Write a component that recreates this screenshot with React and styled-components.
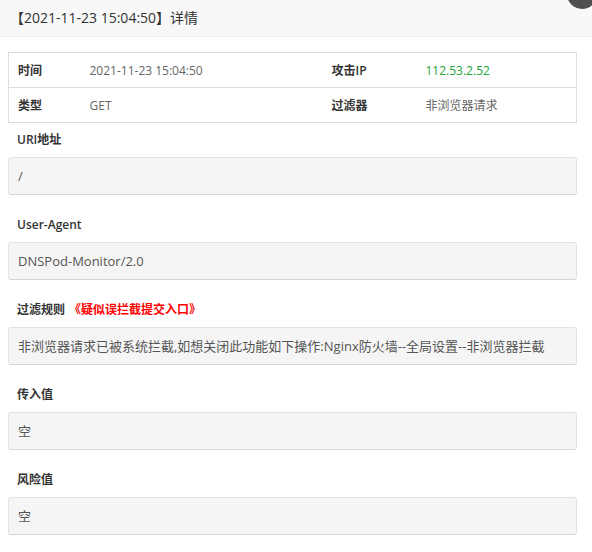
import React from 'react'
import styled, { createGlobalStyle } from 'styled-components'

const GlobalStyle = createGlobalStyle`
  html, body {
    margin: 0;
    padding: 0;
    background: #fff;
  }
  body {
    font-family: "Open Sans", "Noto Sans CJK SC", sans-serif;
    color: #333;
  }
`

const Layer = styled.div`
  position: relative;
  width: 592px;
  height: 552px;
  overflow: hidden;
  background: #fff;
`

const Header = styled.div`
  height: 36px;
  line-height: 36px;
  padding-left: 10px;
  background: #f8f8f8;
  border-bottom: 1px solid #eee;
  font-size: 14px;
  color: #333;
`

const Close = styled.span`
  position: absolute;
  top: -21px;
  right: -5px;
  width: 30px;
  height: 30px;
  border-radius: 50%;
  background: #4f4f4f;
`

const Body = styled.div`
  padding: 15px 15px 0 8px;
`

const Table = styled.table`
  width: 100%;
  table-layout: fixed;
  border-collapse: collapse;
  border: 1px solid #ddd;
  font-size: 12px;
  td {
    height: 34px;
    padding: 0 0 0 9px;
    border-top: 1px solid #ddd;
    color: #666;
  }
`

const Th = styled.td`
  && {
    font-weight: 600;
    color: #333;
  }
`

const Green = styled.span`
  color: #20a53a;
`

const Section = styled.div`
  margin-top: ${p => (p.$first ? 7 : 20)}px;
`

const Label = styled.div`
  height: 20px;
  line-height: 20px;
  padding-left: 9px;
  margin-bottom: 7px;
  font-size: 12px;
  font-weight: 600;
  color: #333;
`

const Link = styled.span`
  color: #f00;
  margin-left: 4px;
`

const Value = styled.div`
  height: 36px;
  line-height: 36px;
  padding-left: 9px;
  background: #f5f5f5;
  border: 1px solid #e2e2e2;
  border-bottom-color: #d6d6d6;
  border-radius: 3px;
  font-size: 13px;
  color: #555;
  white-space: nowrap;
  overflow: hidden;
`

const fields = [
  { label: 'URI地址', value: '/' },
  { label: 'User-Agent', value: 'DNSPod-Monitor/2.0' },
  {
    label: '过滤规则',
    link: '《疑似误拦截提交入口》',
    value: '非浏览器请求已被系统拦截,如想关闭此功能如下操作:Nginx防火墙--全局设置--非浏览器拦截'
  },
  { label: '传入值', value: '空' },
  { label: '风险值', value: '空' }
]

export default function App() {
  return (
    <Layer>
      <GlobalStyle />
      <Header>【2021-11-23 15:04:50】详情</Header>
      <Close />
      <Body>
        <Table>
          <colgroup>
            <col width="72" />
            <col width="242" />
            <col width="94" />
            <col />
          </colgroup>
          <tbody>
            <tr>
              <Th>时间</Th>
              <td>2021-11-23 15:04:50</td>
              <Th>攻击IP</Th>
              <td><Green>112.53.2.52</Green></td>
            </tr>
            <tr>
              <Th>类型</Th>
              <td>GET</td>
              <Th>过滤器</Th>
              <td>非浏览器请求</td>
            </tr>
          </tbody>
        </Table>
        {fields.map((f, i) => (
          <Section key={f.label} $first={i === 0}>
            <Label>
              {f.label}
              {f.link && <Link>{f.link}</Link>}
            </Label>
            <Value>{f.value}</Value>
          </Section>
        ))}
      </Body>
    </Layer>
  )
}
